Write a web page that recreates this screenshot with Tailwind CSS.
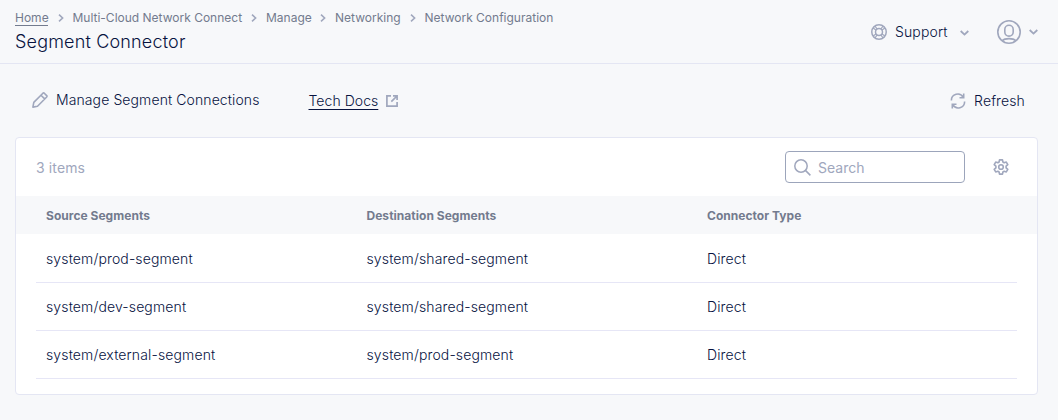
<!DOCTYPE html>
<html lang="en">
<head>
<meta charset="utf-8">
<title>Segment Connector</title>
<script src="https://cdn.jsdelivr.net/npm/@tailwindcss/browser@4"></script>
</head>
<body class="w-[1058px] h-[420px] overflow-hidden bg-[#f7f8fa] font-['Inter',sans-serif] text-sm font-light tracking-[0.13px] text-[#07133f]">
<svg class="hidden">
  <symbol id="right" viewBox="0 0 6 8"><path d="M1 .7 4.600 4 1 7.300" fill="none" stroke="#a0a7bd" stroke-width="1.6"/></symbol>
  <symbol id="down" viewBox="0 0 9 6"><path d="M.7 1 4.500 4.600 8.300 1" fill="none" stroke="#a0a7bd" stroke-width="1.8"/></symbol>
</svg>
<header class="flex h-16 justify-between border-b border-[#e4e6f3] pl-[15px]">
  <div class="pt-[9px]">
    <nav class="flex h-[18px] items-center text-xs font-normal tracking-normal leading-[18px] text-[#737b8e]">
      <a class="w-[33px] h-[16px] leading-[16px] border-b border-[#737b8e] whitespace-nowrap">Home</a>
      <svg class="ml-[9.5px] mr-[9px] h-2 w-1.5"><use href="#right"/></svg>
      <a class="w-[169px] whitespace-nowrap">Multi-Cloud Network Connect</a>
      <svg class="ml-[9px] mr-[9.5px] h-2 w-1.5"><use href="#right"/></svg>
      <a class="w-[45px] whitespace-nowrap">Manage</a>
      <svg class="mx-[9px] h-2 w-1.5"><use href="#right"/></svg>
      <a class="w-[65px] whitespace-nowrap">Networking</a>
      <svg class="ml-[9.5px] mr-[9px] h-2 w-1.5"><use href="#right"/></svg>
      <a class="whitespace-nowrap">Network Configuration</a>
    </nav>
    <h1 class="mt-[3px] text-lg font-light leading-6 tracking-[0.17px]">Segment Connector</h1>
  </div>
  <div class="flex h-16 items-center pr-[20px]">
    <svg class="h-4 w-4" viewBox="0 0 16 16" fill="none" stroke="#a0a7bd" stroke-width="1.500"><circle cx="8" cy="8" r="7.250"/><circle cx="8" cy="8" r="3.500"/><path d="m2.200 4 3 2.200M4 2.200l2.200 3M13.800 4l-3 2.200M12 2.200l-2.200 3M2.200 12l3-2.200M4 13.800l2.200-3M13.800 12l-3-2.200M12 13.800l-2.200-3" stroke-width="1.100"/></svg>
    <span class="ml-2 w-[65px]">Support</span>
    <svg class="mt-[2px] h-1.5 w-[9px]"><use href="#down"/></svg>
    <svg class="ml-7 h-6 w-6" viewBox="0 0 24 24" fill="none" stroke="#a0a7bd" stroke-width="1.600"><circle cx="12" cy="12" r="11.200"/><rect x="7.800" y="5.300" width="8.400" height="10.800" rx="4.200"/><path d="M5.500 20.600c1.200-1.400 3.200-2 6.500-2s5.300.6 6.500 2"/></svg>
    <svg class="ml-2 h-1.5 w-[9px]"><use href="#down"/></svg>
  </div>
</header>
<section class="flex h-[73px] items-center pl-[32px] pr-[33px]">
  <svg class="-mt-[2px] h-4 w-4" viewBox="0 0 16 16" fill="none" stroke="#a0a7bd" stroke-width="1.600" stroke-linejoin="round"><path d="m.9 15.100.9-4.700L10.900 1.200q.7-.6 1.400 0l2.400 2.400q.6.7 0 1.400L5.500 14.200.9 15.100ZM9 3.200l3.700 3.700"/></svg>
  <span class="-mt-px ml-2 w-[252.5px] tracking-[0.1px]">Manage Segment Connections</span>
  <a class="mt-px w-[69.5px] whitespace-nowrap tracking-[0.05px] underline underline-offset-[3px]">Tech Docs</a>
  <svg class="ml-2 h-3 w-3" viewBox="0 0 12 12" fill="none" stroke="#a0a7bd" stroke-width="1.700"><path d="M5 .9H.9v10.200h10.200V7M7 .9h4.100V5M11 1 5.300 6.700"/></svg>
  <svg class="ml-auto h-4 w-4" viewBox="0 0 16 16" fill="none" stroke="#a0a7bd" stroke-width="1.600"><path d="M1.400 7.500A6.300 6.300 0 0 1 13.200 4.300M13.700.5v4.200H9.500M14.600 8.500A6.300 6.300 0 0 1 2.800 11.700M2.300 15.500v-4.200h4.200"/></svg>
  <span class="ml-2 mt-px">Refresh</span>
</section>
<main class="mx-[15px] mr-5 h-[258px] rounded border border-[#e4e6f3] bg-white">
  <div class="flex h-[58px] items-center pl-[20px] pr-7">
    <span class="mt-px font-normal text-[#a0a7bd]">3 items</span>
    <label class="ml-auto flex h-8 w-[180px] items-center rounded border border-[#9ca5bb] pl-2 font-normal tracking-normal text-[#a0a7bd]">
      <svg class="h-[17px] w-[17px]" viewBox="0 0 17 17" fill="none" stroke="#a0a7bd" stroke-width="1.500"><circle cx="7" cy="7" r="6.200"/><path d="m11.400 11.400 5 5"/></svg>
      <span class="ml-[7px] mt-px">Search</span>
    </label>
    <svg class="ml-7 -mt-px h-4 w-4" viewBox="0 0 16 16" fill="none" stroke="#a0a7bd" stroke-width="1.600" stroke-linejoin="round"><path d="M6.500.9h3l.4 2.100 1.300.8 2.100-.7 1.500 2.500-1.700 1.500v1.800l1.700 1.500-1.500 2.500-2.100-.7-1.300.8-.4 2.100h-3L6.100 13l-1.300-.8-2.100.7-1.500-2.500 1.700-1.500V7.100L1.200 5.600l1.500-2.500 2.100.7L6.100 3Z"/><circle cx="8" cy="8" r="2.300"/></svg>
  </div>
  <div class="grid h-[38px] grid-cols-[320.5px_340.5px_1fr] items-center bg-[#f7f8fa] pl-[30px] pt-[2px] text-xs font-bold tracking-[0.03px] text-[#737b8e]"><span>Source Segments</span><span>Destination Segments</span><span>Connector Type</span></div>
  <div class="mx-5">
    <div class="grid h-[49px] grid-cols-[320.5px_340.5px_1fr] items-center border-b border-[#e6e6f6] pl-[10px] pt-[2px]"><span>system/prod-segment</span><span>system/shared-segment</span><span>Direct</span></div>
    <div class="grid h-12 grid-cols-[320.5px_340.5px_1fr] items-center border-b border-[#e6e6f6] pl-[10px]"><span>system/dev-segment</span><span>system/shared-segment</span><span>Direct</span></div>
    <div class="grid h-12 grid-cols-[320.5px_340.5px_1fr] items-center border-b border-[#e6e6f6] pl-[10px]"><span>system/external-segment</span><span>system/prod-segment</span><span>Direct</span></div>
  </div>
</main>
</body>
</html>
